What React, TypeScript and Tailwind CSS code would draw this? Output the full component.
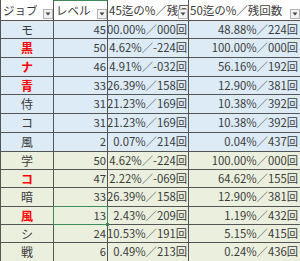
import React from "react";

type Row = { job: string; red: boolean; lv: number; c: string; d: string; green: boolean; h: number };

const rows: Row[] = [
  { job: "モ", red: false, lv: 45, c: "100.00%／000回", d: "48.88%／224回", green: false, h: 18 },
  { job: "黒", red: true, lv: 50, c: "4.62%／-224回", d: "100.00%／000回", green: false, h: 19 },
  { job: "ナ", red: true, lv: 46, c: "4.91%／-032回", d: "56.16%／192回", green: false, h: 19 },
  { job: "青", red: true, lv: 33, c: "26.39%／158回", d: "12.90%／381回", green: false, h: 18 },
  { job: "侍", red: false, lv: 31, c: "21.23%／169回", d: "10.38%／392回", green: false, h: 19 },
  { job: "コ", red: false, lv: 31, c: "21.23%／169回", d: "10.38%／392回", green: false, h: 19 },
  { job: "風", red: false, lv: 2, c: "0.07%／214回", d: "0.04%／437回", green: false, h: 19 },
  { job: "学", red: false, lv: 50, c: "4.62%／-224回", d: "100.00%／000回", green: true, h: 18 },
  { job: "コ", red: true, lv: 47, c: "2.22%／-069回", d: "64.62%／155回", green: true, h: 18 },
  { job: "暗", red: false, lv: 33, c: "26.39%／158回", d: "12.90%／381回", green: true, h: 19 },
  { job: "風", red: true, lv: 13, c: "2.43%／209回", d: "1.19%／432回", green: true, h: 18 },
  { job: "シ", red: false, lv: 24, c: "10.53%／191回", d: "5.15%／415回", green: true, h: 18 },
  { job: "戦", red: false, lv: 6, c: "0.49%／213回", d: "0.24%／436回", green: true, h: 19 },
];

function FilterButton() {
  return (
    <div className="absolute right-0 bottom-[1px] w-[10px] h-[10px] border border-[#b4b4b4] bg-[#f2f2f2] flex items-center justify-center">
      <svg width="6" height="4" viewBox="0 0 6 4">
        <path d="M0.5 0.5 L5.5 0.5 L3 3.5 Z" fill="#444" />
      </svg>
    </div>
  );
}

export default function App() {
  return (
    <div className="w-[300px] h-[261px] overflow-hidden bg-white font-['Noto_Sans_CJK_JP',sans-serif] text-[11.3px] text-[#3a3a3a] leading-none">
      <div className="w-[301px]">
        <div className="grid grid-cols-[54px_54px_81px_112px] h-[21px] bg-white text-[11.5px]">
          <div className="relative border-l border-r border-b border-[#555] pl-[2px] pt-[5px] whitespace-nowrap overflow-hidden">
            ジョブ
            <FilterButton />
          </div>
          <div className="relative border-r border-b border-[#555] pl-[2px] pt-[5px] whitespace-nowrap overflow-hidden">
            <div className="absolute top-0 left-0 right-0 h-[1px] bg-[#3c8c5c]" />
            レベル
            <FilterButton />
          </div>
          <div className="relative border-r border-b border-[#555] pl-[1px] pt-[5px] whitespace-nowrap overflow-hidden">
            45迄の%／残回数
            <FilterButton />
          </div>
          <div className="relative border-r border-b border-[#555] pl-[1px] pt-[5px] whitespace-nowrap overflow-hidden">
            50迄の%／残回数
            <FilterButton />
          </div>
        </div>
        {rows.map((r, i) => (
          <div
            key={i}
            className={`grid grid-cols-[54px_54px_81px_112px] ${r.h === 18 ? "h-[18px]" : "h-[19px]"} ${
              r.green ? "bg-[#ebf0de]" : "bg-[#ddebf7]"
            }`}
          >
            <div
              className={`border-l border-r border-b border-[#555] flex items-center justify-center text-[12px] ${
                r.red ? "text-[#ff0000] font-bold" : ""
              }`}
            >
              {r.job}
            </div>
            <div className="relative border-r border-b border-[#555] flex items-center justify-end pr-[1px]">
              {r.lv}
              {i === 10 && (
                <>
                  <div className="absolute -left-[1px] -top-[1px] -right-[1px] -bottom-[1px] border border-[#3c8c5c]" />
                  <div className="absolute -right-[2px] -bottom-[2px] w-[3px] h-[3px] bg-[#3c8c5c]" />
                </>
              )}
            </div>
            <div className="border-r border-b border-[#555] flex items-center justify-end pr-[1px] overflow-hidden whitespace-nowrap">
              {r.c}
            </div>
            <div className="border-r border-b border-[#555] flex items-center justify-end pr-[2px] overflow-hidden whitespace-nowrap">
              {r.d}
            </div>
          </div>
        ))}
      </div>
    </div>
  );
}
